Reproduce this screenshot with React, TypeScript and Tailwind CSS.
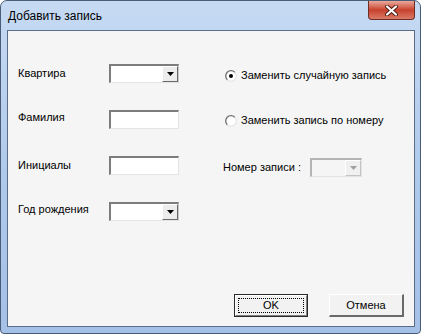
import React from "react";

const font = "font-['Liberation_Sans',Arial,sans-serif]";

function DropArrow({ disabled }: { disabled?: boolean }) {
  return (
    <svg width="7" height="4" viewBox="0 0 7 4">
      <path d="M0 0h7L3.5 4z" fill={disabled ? "#a0a0a0" : "#000"} />
    </svg>
  );
}

function Combo({ disabled, w = "w-[70px]" }: { disabled?: boolean; w?: string }) {
  return (
    <div
      className={`${w} h-[19px] flex border-t-2 border-l-2 border-r border-b ${
        disabled
          ? "border-t-[#b4b4b4] border-l-[#b4b4b4] border-r-[#e2e2e2] border-b-[#e2e2e2] bg-[#f5f5f5]"
          : "border-t-[#7c7c7c] border-l-[#7c7c7c] border-r-[#c8c8c8] border-b-[#e4e4e4] bg-white"
      }`}
    >
      <div className="flex-1" />
      <div
        className={`w-[16px] flex items-center justify-center border-t border-l border-r border-b ${
          disabled
            ? "border-t-white border-l-white border-r-[#c4c4c4] border-b-[#c4c4c4] bg-[#f0f0f0]"
            : "border-t-white border-l-white border-r-[#6a6a6a] border-b-[#6a6a6a] bg-[#ececec]"
        }`}
      >
        <DropArrow disabled={disabled} />
      </div>
    </div>
  );
}

function TextBox() {
  return (
    <div className="w-[70px] h-[19px] bg-white border-t-2 border-l-2 border-r border-b border-t-[#7c7c7c] border-l-[#7c7c7c] border-r-[#e4e4e4] border-b-[#e4e4e4]" />
  );
}

function Radio({ checked }: { checked?: boolean }) {
  return (
    <svg width="12" height="12" viewBox="0 0 12 12">
      <defs>
        <linearGradient id="rg" x1="0" y1="0" x2="1" y2="1">
          <stop offset="0.45" stopColor="#6c6c6c" />
          <stop offset="0.55" stopColor="#e6e6e6" />
        </linearGradient>
      </defs>
      <circle cx="6" cy="6" r="5.3" fill="#fff" stroke="url(#rg)" strokeWidth="1.3" />
      {checked && <circle cx="6" cy="6" r="2" fill="#000" />}
    </svg>
  );
}

function Field({ label, children, lift }: { label: string; children: React.ReactNode; lift?: boolean }) {
  return (
    <div className="h-[19px] flex items-center">
      <span className={`w-[91px] text-[11px] text-black ${lift ? "mb-[4px]" : ""}`}>{label}</span>
      {children}
    </div>
  );
}

export default function App() {
  return (
    <div className={`w-[421px] h-[335px] bg-white ${font}`}>
      <div className="w-[421px] h-[334px] flex flex-col rounded-t-[7px] rounded-b-[4px] border border-[#4a5d78] bg-gradient-to-b from-[#c6daf3] via-[#b0caeb] to-[#a4c0e7]">
        <div className="h-[29px] flex items-start pl-[7px]">
          <span className="mt-[8px] text-[12px] leading-[14px] text-black">Добавить запись</span>
          <div className="ml-auto mr-[5px] w-[47px] h-[19px] flex items-center justify-center rounded-b-[4px] border border-t-0 border-[#6e2c24] bg-gradient-to-b from-[#e9a89c] via-[#c7402c] to-[#d97a66]">
            <svg width="13" height="11" viewBox="0 0 13 11">
              <path d="M2 1.5l9 8M11 1.5l-9 8" stroke="#4a1a14" strokeWidth="4" strokeLinecap="round" />
              <path d="M2 1.5l9 8M11 1.5l-9 8" stroke="#fff" strokeWidth="2.2" strokeLinecap="round" />
            </svg>
          </div>
        </div>
        <div className="ml-[6px] mr-[5px] mb-[6px] flex-1 flex flex-col border border-[#5b6d86] bg-[#f5f5f5]">
          <div className="flex">
            <div className="pl-[10px] pt-[33px] flex flex-col gap-[27px]">
              <Field label="Квартира">
                <Combo />
              </Field>
              <Field label="Фамилия" lift>
                <TextBox />
              </Field>
              <Field label="Инициалы">
                <TextBox />
              </Field>
              <Field label="Год рождения" lift>
                <Combo />
              </Field>
            </div>
            <div className="ml-[44px] pt-[35px] flex flex-col">
              <div className="h-[19px] flex items-center pl-[2px] gap-[4px] text-[11px] text-black">
                <Radio checked />
                <span>Заменить случайную запись</span>
              </div>
              <div className="mt-[26px] h-[19px] flex items-center pl-[2px] gap-[4px] text-[11px] text-black">
                <Radio />
                <span>Заменить запись по номеру</span>
              </div>
              <div className="mt-[27px] h-[20px] flex items-center text-[11px] text-black">
                <span className="w-[87px]">Номер записи :</span>
                <Combo disabled w="w-[52px]" />
              </div>
            </div>
          </div>
          <div className="mt-auto flex justify-end gap-[21px] pr-[10px] pb-[9px]">
            <div className="w-[74px] h-[23px] border border-[#2a2a2a] flex">
              <div className="flex-1 flex p-[2px] border-t border-l border-r border-b border-t-white border-l-white border-r-[#808080] border-b-[#808080] bg-[#f2f2f2]">
                <div className="flex-1 flex items-center justify-center border border-dotted border-black text-[11px] text-black">
                  OK
                </div>
              </div>
            </div>
            <div className="w-[75px] h-[23px] flex items-center justify-center border-t border-l border-r-2 border-b-2 border-t-white border-l-white border-r-[#6a6a6a] border-b-[#6a6a6a] bg-[#f2f2f2] text-[11px] text-black">
              Отмена
            </div>
          </div>
        </div>
      </div>
    </div>
  );
}
